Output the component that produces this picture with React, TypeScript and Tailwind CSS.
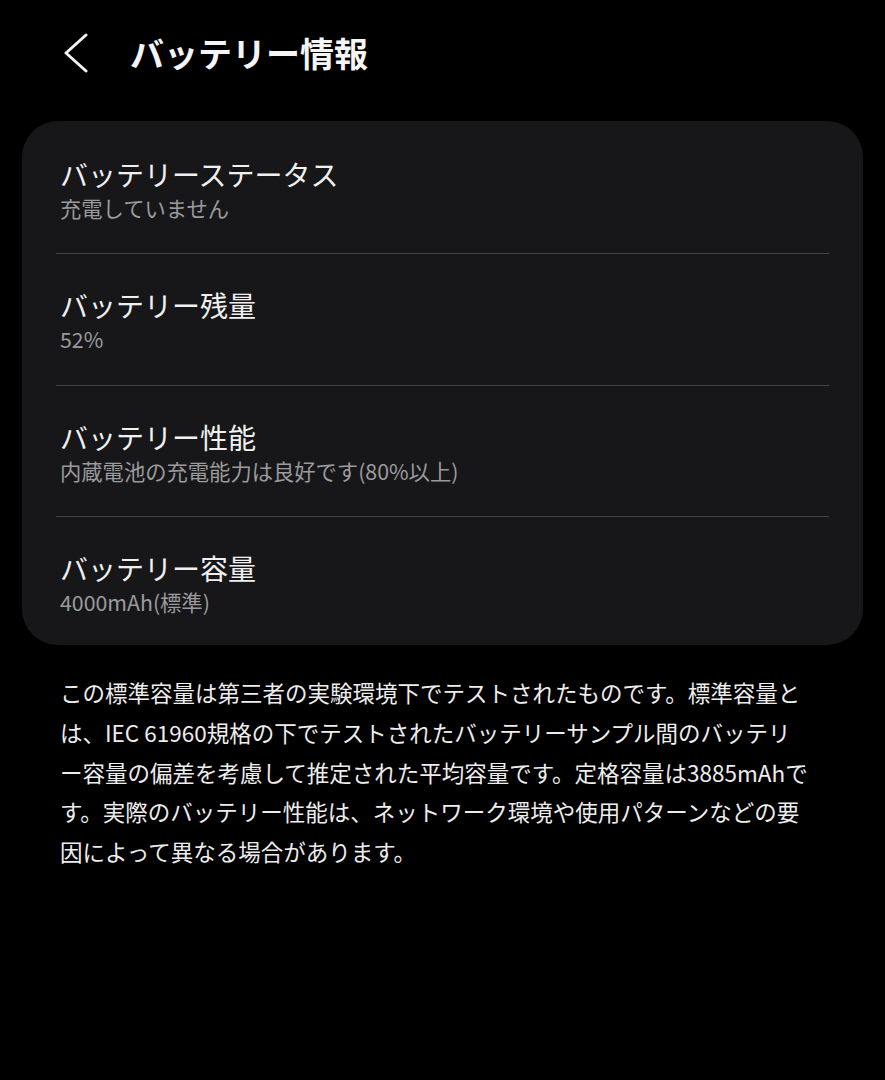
const rows = [
  { title: 'バッテリーステータス', value: '充電していません' },
  { title: 'バッテリー残量', value: '52%' },
  { title: 'バッテリー性能', value: '内蔵電池の充電能力は良好です(80%以上)' },
  { title: 'バッテリー容量', value: '4000mAh(標準)' },
];

const font = { fontFamily: '"Noto Sans CJK JP", "Noto Sans", sans-serif' };

export default function App() {
  return (
    <div className="min-h-screen bg-black px-[22px] text-white" style={font}>
      {/* header */}
      <header className="flex h-[106px] items-center">
        <svg width="28" height="40" viewBox="0 0 28 40" className="ml-[40px]" fill="none">
          <path d="M24 2 L4 20 L24 38" stroke="#f2f2f2" strokeWidth="3" strokeLinecap="round" strokeLinejoin="round" />
        </svg>
        <h1 className="ml-[40px] text-[34px] leading-none font-bold text-[#f5f5f5]">バッテリー情報</h1>
      </header>

      {/* info card */}
      <div className="mt-[15px] rounded-[36px] bg-[#171719] px-[34px] pt-[1.5px]">
        {rows.map((row, i) => (
          <div
            key={row.title}
            className={`pt-[33px] ${i < rows.length - 1 ? 'border-b border-[#444446] pb-[31.5px]' : 'pb-[29px]'}`}
          >
            <div className="px-[4px] text-[28px] leading-[36px] text-[#f0f0f0]">{row.title}</div>
            <div className="mt-[2px] px-[4px] text-[21.3px] leading-[28px] text-[#9b9b9d]">{row.value}</div>
          </div>
        ))}
      </div>

      {/* footnote */}
      <p className="mt-[28px] pl-[38px] pr-[30px] text-[22.5px] leading-[39.8px] text-[#ededed]">
        この標準容量は第三者の実験環境下でテストされたものです。標準容量と
        <br />
        は、IEC 61960規格の下でテストされたバッテリーサンプル間のバッテリ
        <br />
        ー容量の偏差を考慮して推定された平均容量です。定格容量は3885mAhで
        <br />
        す。実際のバッテリー性能は、ネットワーク環境や使用パターンなどの要
        <br />
        因によって異なる場合があります。
      </p>
    </div>
  );
}
